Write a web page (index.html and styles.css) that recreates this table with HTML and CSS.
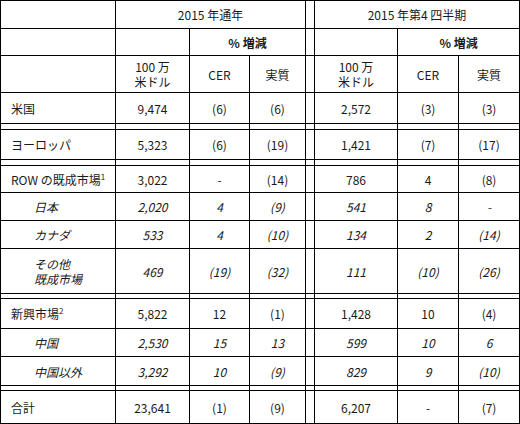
FILE: index.html
```html
<!DOCTYPE html>
<html lang="ja">
<head>
  <meta charset="UTF-8">
  <title>地域別売上</title>
  <link rel="stylesheet" href="styles.css">
</head>
<body>

  <table class="sales">
    <colgroup>
      <col class="c-label">
      <col class="c-usd">
      <col class="c-cer">
      <col class="c-real">
      <col class="c-gap">
      <col class="c-usd2">
      <col class="c-cer2">
      <col class="c-real2">
    </colgroup>
    <thead>
      <tr class="h1">
        <th></th>
        <th colspan="3">2015 年通年</th>
        <th></th>
        <th colspan="3">2015 年第4 四半期</th>
      </tr>
      <tr class="h2">
        <th></th>
        <th></th>
        <th colspan="2" class="pct">% 増減</th>
        <th></th>
        <th></th>
        <th colspan="2" class="pct">% 増減</th>
      </tr>
      <tr class="h3">
        <th></th>
        <th>100 万<br>米ドル</th>
        <th>CER</th>
        <th>実質</th>
        <th></th>
        <th>100 万<br>米ドル</th>
        <th>CER</th>
        <th>実質</th>
      </tr>
    </thead>
    <tbody>
      <tr class="r31">
        <td class="label">米国</td>
        <td>9,474</td><td>(6)</td><td>(6)</td>
        <td></td>
        <td>2,572</td><td>(3)</td><td>(3)</td>
      </tr>
      <tr class="gap6"><td></td><td></td><td></td><td></td><td></td><td></td><td></td><td></td></tr>
      <tr class="r30">
        <td class="label">ヨーロッパ</td>
        <td>5,323</td><td>(6)</td><td>(19)</td>
        <td></td>
        <td>1,421</td><td>(7)</td><td>(17)</td>
      </tr>
      <tr class="gap6"><td></td><td></td><td></td><td></td><td></td><td></td><td></td><td></td></tr>
      <tr class="r27">
        <td class="label">ROW の既成市場<sup>1</sup></td>
        <td>3,022</td><td>-</td><td>(14)</td>
        <td></td>
        <td>786</td><td>4</td><td>(8)</td>
      </tr>
      <tr class="r28 sub">
        <td class="label">日本</td>
        <td>2,020</td><td>4</td><td>(9)</td>
        <td></td>
        <td>541</td><td>8</td><td>-</td>
      </tr>
      <tr class="r28 sub">
        <td class="label">カナダ</td>
        <td>533</td><td>4</td><td>(10)</td>
        <td></td>
        <td>134</td><td>2</td><td>(14)</td>
      </tr>
      <tr class="r45 sub">
        <td class="label">その他<br>既成市場</td>
        <td>469</td><td>(19)</td><td>(32)</td>
        <td></td>
        <td>111</td><td>(10)</td><td>(26)</td>
      </tr>
      <tr class="gap5"><td></td><td></td><td></td><td></td><td></td><td></td><td></td><td></td></tr>
      <tr class="r30">
        <td class="label">新興市場<sup>2</sup></td>
        <td>5,822</td><td>12</td><td>(1)</td>
        <td></td>
        <td>1,428</td><td>10</td><td>(4)</td>
      </tr>
      <tr class="r28 sub">
        <td class="label">中国</td>
        <td>2,530</td><td>15</td><td>13</td>
        <td></td>
        <td>599</td><td>10</td><td>6</td>
      </tr>
      <tr class="r29 sub">
        <td class="label">中国以外</td>
        <td>3,292</td><td>10</td><td>(9)</td>
        <td></td>
        <td>829</td><td>9</td><td>(10)</td>
      </tr>
      <tr class="gap5"><td></td><td></td><td></td><td></td><td></td><td></td><td></td><td></td></tr>
      <tr class="r33">
        <td class="label">合計</td>
        <td>23,641</td><td>(1)</td><td>(9)</td>
        <td></td>
        <td>6,207</td><td>-</td><td>(7)</td>
      </tr>
    </tbody>
  </table>

</body>
</html>
```

FILE: styles.css
```css
body {
  margin: 0;
  background-color: #ffffff;
  font-family: "Noto Sans CJK JP", "Noto Sans", sans-serif;
  font-size: 12px;
  color: #1a1a1a;
}

.sales {
  table-layout: fixed;
  width: 520px;
  border-collapse: collapse;
}

.c-label { width: 115px; }
.c-usd   { width: 74px; }
.c-cer   { width: 60px; }
.c-real  { width: 56px; }
.c-gap   { width: 9px; }
.c-usd2  { width: 83px; }
.c-cer2  { width: 61px; }
.c-real2 { width: 61px; }

.sales th,
.sales td {
  border: 1px solid #000;
  padding: 0;
  text-align: center;
  vertical-align: middle;
  line-height: 15px;
  font-weight: normal;
}

.sales th.pct {
  font-weight: bold;
}

.h1 { height: 28px; }
.h2 { height: 27px; }
.h3 { height: 37px; }

.r27 { height: 27px; }
.r28 { height: 28px; }
.r29 { height: 29px; }
.r30 { height: 30px; }
.r31 { height: 31px; }
.r33 { height: 33px; }
.r45 { height: 45px; }

.gap5 { height: 5px; }
.gap6 { height: 6px; }

.gap5 td,
.gap6 td {
  line-height: 0;
  font-size: 0;
}

.sales td.label {
  text-align: left;
  padding-left: 10px;
}

.sub td {
  font-style: italic;
}

.sub td.label {
  padding-left: 33px;
}

sup {
  font-size: 8px;
  line-height: 0;
  vertical-align: 5px;
}
```
